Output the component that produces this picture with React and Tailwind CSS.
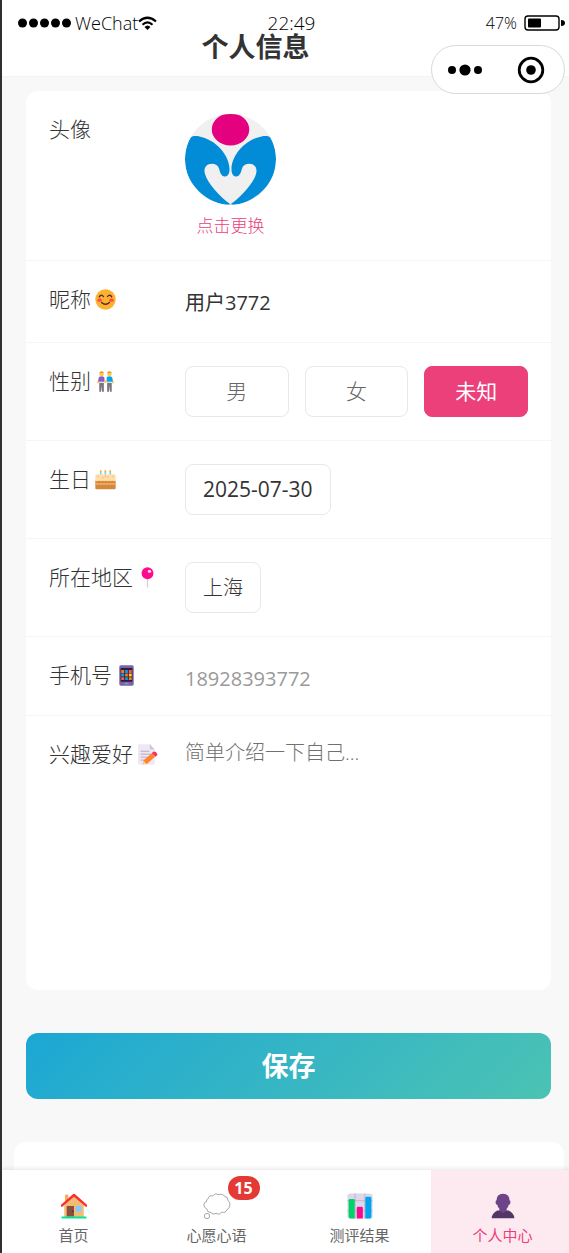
import React, { useState } from "react";

function LogoHalf() {
  return (
    <path
      d="M17 70C22 66 32 65 43 67C92 76 134 124 133 166C133 180 127 187 119 187C110 187 105 178 102 164C99 154 91 149 80 149C64 149 54 162 60 180C68 206 100 244 136 270C122 273 104 269 84 260C34 236 0 190 0 136C0 108 7 85 17 70Z"
      fill="#028cd8"
    />
  );
}

function AvatarArt() {
  return (
    <svg viewBox="0 0 272 272" className="block size-[91px]" role="img" aria-label="头像">
      <clipPath id="avatar-round">
        <circle cx="136" cy="136" r="136" />
      </clipPath>
      <g clipPath="url(#avatar-round)">
        <rect width="272" height="272" fill="#f0f0f0" />
        <ellipse cx="136" cy="46" rx="56" ry="48" fill="#e4007f" />
        <LogoHalf />
        <g transform="translate(272 0) scale(-1 1)">
          <LogoHalf />
        </g>
      </g>
    </svg>
  );
}

function Icon({ children, className = "size-[21px]" }) {
  return (
    <svg viewBox="0 0 64 64" className={"shrink-0 " + className} aria-hidden="true">
      {children}
    </svg>
  );
}

const Smile = () => (
  <Icon>
    <circle cx="32" cy="32" r="31" fill="#ffb02e" />
    <ellipse cx="14" cy="34" rx="7" ry="5" fill="#ff4a4a" />
    <ellipse cx="50" cy="34" rx="7" ry="5" fill="#ff4a4a" />
    <g fill="none" stroke="#402a32" strokeWidth="4" strokeLinecap="round">
      <path d="M13 24Q19 14 26 23M38 23Q45 14 51 24M20 41Q32 52 44 41" />
    </g>
  </Icon>
);

const People = () => (
  <Icon>
    <path d="M13 36H27V63H21.5L20 45L18.500 63H13ZM37 36H51V63H45.500L44 45L42.500 63H37Z" fill="#7d7481" />
    <path d="M12 18Q20 14 28 18L30 33H12L11 36H8Z" fill="#8b5cc4" />
    <path d="M36 18Q44 14 52 18L56 36H53L52 33H35Z" fill="#00a6ed" />
    <path d="M28 29H36V36H28ZM7 31H12V37H7ZM52 31H57V37H52Z" fill="#ffc83d" />
    <circle cx="20" cy="9" r="7" fill="#ffc83d" />
    <circle cx="44" cy="9" r="7" fill="#ffc83d" />
    <path d="M13 7Q14 1 20 1Q26 1 27 7L23 5H17ZM37 7Q38 1 44 1Q50 1 51 7L47 5H41Z" fill="#d68c4a" />
  </Icon>
);

const Cake = () => (
  <Icon>
    <path d="M15 7H20V22H15ZM29 7H34V22H29ZM44 7H49V22H44Z" fill="#5ce0f0" />
    <path d="M15 6Q17-2 20 6V9H15ZM29 6Q31-2 34 6V9H29ZM44 6Q46-2 49 6V9H44Z" fill="#ffb02e" />
    <rect x="1" y="34" width="62" height="28" rx="3" fill="#d3883e" />
    <rect x="1" y="43" width="62" height="5" fill="#f3ad61" />
    <path d="M1 21Q1 16 6 16H58Q63 16 63 21V36Q58 39 53 35Q48 39 43 35Q38 39 33 35Q28 39 23 35Q18 39 13 35Q7 39 1 36Z" fill="#ffdea7" />
    <g fill="#f9a06a">
      <circle cx="9" cy="23" r="2" />
      <circle cx="24" cy="27" r="2" />
      <circle cx="40" cy="25" r="2" />
      <circle cx="55" cy="23" r="2" />
      <circle cx="32" cy="22" r="2" />
    </g>
  </Icon>
);

const Pin = () => (
  <Icon>
    <rect x="30" y="32" width="4" height="31" rx="2" fill="#d3d3d3" />
    <circle cx="32" cy="19" r="18" fill="#ff0a8c" />
    <circle cx="38" cy="13" r="5" fill="#ffd6ee" />
  </Icon>
);

const Phone = () => (
  <Icon>
    <rect x="10" y="1" width="44" height="62" rx="5" fill="#7864a8" />
    <rect x="14" y="9" width="36" height="42" fill="#321b41" />
    <path d="M16 15H25V24H16ZM28 26H36V35H28ZM39 37H48V46H39Z" fill="#ff7a1a" />
    <path d="M28 15H36V24H28ZM16 26H25V35H16ZM28 37H36V46H28Z" fill="#00a6ed" />
    <path d="M39 15H48V24H39ZM16 37H25V46H16Z" fill="#ff5a3c" />
    <path d="M39 26H48V35H39Z" fill="#ffc83d" />
    <rect x="26" y="54" width="12" height="5" rx="2" fill="#998eb8" />
  </Icon>
);

const Memo = () => (
  <Icon>
    <path d="M7 1H39L54 17V59Q54 63 50 63H7Q3 63 3 59V5Q3 1 7 1Z" fill="#eee8f5" />
    <path d="M39 1L54 17H43Q39 17 39 13Z" fill="#cdc4d6" />
    <path d="M11 22H38M11 31H42M11 40H31M11 49H22" stroke="#b4aac2" strokeWidth="3" />
    <path d="M21 49L45 28L55 39L31 60L17 62Z" fill="#ff822d" />
    <path d="M17 62L20 51L29 60Z" fill="#ffce7c" />
    <path d="M47 26Q52 20 58 25Q65 32 60 36L56 39L45 28Z" fill="#f92f60" />
  </Icon>
);

const House = () => (
  <Icon className="size-[26px]">
    <rect x="10" y="4" width="8" height="24" fill="#f3ad61" />
    <path d="M8 30L32 7L56 30V59H8Z" fill="#f1bd74" />
    <path d="M2 31L32 5L62 31" fill="none" stroke="#f8312f" strokeWidth="6" strokeLinecap="round" strokeLinejoin="round" />
    <rect x="14" y="32" width="18" height="26" fill="#8c4f3c" />
    <circle cx="28" cy="45" r="2" fill="#402a32" />
    <rect x="36" y="32" width="14" height="14" fill="#83cbff" />
    <rect x="1" y="58" width="62" height="5" rx="2" fill="#00e69a" />
  </Icon>
);

const Thought = () => (
  <Icon className="size-[28px]">
    <g fill="#fff" stroke="#999" strokeWidth="2">
      <path d="M12 15Q13 7 22 9Q28 1 36 6Q45 3 49 10Q57 10 57 19Q64 25 61 33Q59 39 55 40Q52 49 43 46Q38 54 30 49Q22 53 18 47Q9 47 9 39Q1 36 2 28Q3 23 8 22Q7 17 12 15Z" />
      <circle cx="9" cy="55" r="6" />
    </g>
  </Icon>
);

const Chart = () => (
  <Icon className="size-[26px]">
    <rect x="1" y="1" width="62" height="62" rx="7" fill="#e0d6ea" />
    <path d="M20 1V63M44 1V63M1 19H63M1 44H63" stroke="#b8adc6" strokeWidth="2" />
    <path d="M4 18Q4 15 7 15H16Q19 15 19 18V63H9Q4 63 4 58Z" fill="#00d26a" />
    <rect x="24" y="34" width="15" height="29" rx="3" fill="#f70a8d" />
    <path d="M45 12Q45 9 48 9H57Q60 9 60 12V59Q60 63 56 63H45Z" fill="#00a6ed" />
  </Icon>
);

const Person = () => (
  <Icon className="size-[26px]">
    <path d="M4 62Q5 49 18 43H46Q59 49 60 62Z" fill="#533566" />
    <path d="M32 2Q48 2 48 18Q51 19 50 25Q49 29 46 29Q45 35 41 39V43L32 50L23 43V39Q19 35 18 29Q15 29 14 25Q13 19 16 18Q16 2 32 2Z" fill="#6d4488" />
  </Icon>
);

function Row({ label, icon, htmlFor, last, children }) {
  return (
    <div className={"flex items-start p-[23px] " + (last ? "" : "border-b border-[#f5f5f5]")}>
      <label
        id={htmlFor + "-label"}
        htmlFor={htmlFor}
        className="flex w-[136px] shrink-0 items-center gap-1 text-[21px] leading-[31px] font-light"
      >
        {label}
        {icon}
      </label>
      <div className="flex min-w-0 flex-1">{children}</div>
    </div>
  );
}

const boxed = "h-[51px] rounded-lg border border-[#e8e8e8] bg-white px-[17px]";
const genders = ["男", "女", "未知"];
const tabs = [
  { name: "首页", Glyph: House },
  { name: "心愿心语", Glyph: Thought, badge: 15 },
  { name: "测评结果", Glyph: Chart },
  { name: "个人中心", Glyph: Person, active: true },
];

function StatusBar() {
  return (
    <div className="absolute inset-x-0 top-0 grid h-[46px] grid-cols-3 items-center pr-1 pl-4 text-[18px] font-light text-black">
      <div className="flex items-center">
        <svg viewBox="0 0 53 10" className="h-[10px] w-[53px]" aria-hidden="true">
          <circle cx="4.500" cy="5" r="4.500" />
          <circle cx="15.500" cy="5" r="4.500" />
          <circle cx="26.500" cy="5" r="4.500" />
          <circle cx="37.500" cy="5" r="4.500" />
          <circle cx="48.500" cy="5" r="4.500" />
        </svg>
        <span className="ml-1">WeChat</span>
        <svg viewBox="0 0 19 14" className="h-[14px] w-[19px] shrink-0" fill="none" stroke="#000" strokeWidth="2.200" aria-hidden="true">
          <path d="M1 5.500Q9.500-2 18 5.500M4.500 8.800Q9.500 4 14.500 8.800" />
          <path d="M6.500 11Q9.500 8 12.500 11L9.500 14Z" fill="#000" stroke="none" />
        </svg>
      </div>
      <span className="text-center text-[19px]">22:49</span>
      <div className="flex items-center justify-end gap-[7px] text-[16px]">
        <span>47%</span>
        <svg viewBox="0 0 41 16" className="h-4 w-[41px]" aria-hidden="true">
          <rect x="1" y="1" width="34" height="14" rx="3" fill="none" stroke="#000" strokeWidth="1.400" />
          <rect x="4" y="3.500" width="13" height="9" rx="1" />
          <path d="M37 5Q41 5 41 8Q41 11 37 11Z" />
        </svg>
      </div>
    </div>
  );
}

export default function App() {
  const [gender, setGender] = useState("未知");
  return (
    <div
      lang="zh-CN"
      className="flex min-h-screen flex-col overflow-x-clip border-l-2 border-[#303033] bg-[#f8f8f8] font-['Open_Sans','Noto_Sans_CJK_SC',sans-serif] text-[#333]"
    >
      <header className="relative border-b border-[#f3f3f3] bg-white pt-[30px] pr-[60px] pb-[13px]">
        <h1 className="text-center text-[27px] leading-[33px] font-bold">个人信息</h1>
        <StatusBar />
        <div className="absolute top-[45px] right-1 flex h-[49px] w-[134px] items-center justify-between rounded-full border border-[#d8d8d8] bg-white pr-[19px] pl-4">
          <button type="button" aria-label="更多">
            <svg viewBox="0 0 35 12" className="h-3 w-[35px]">
              <circle cx="4" cy="6" r="4" />
              <circle cx="17" cy="6" r="5.600" />
              <circle cx="30" cy="6" r="4" />
            </svg>
          </button>
          <button type="button" aria-label="关闭">
            <svg viewBox="0 0 28 28" className="size-7">
              <circle cx="14" cy="14" r="11.800" fill="none" stroke="#000" strokeWidth="2.800" />
              <circle cx="14" cy="14" r="4.800" />
            </svg>
          </button>
        </div>
      </header>

      <main className="flex flex-1 flex-col pt-[14px]">
        <form className="mr-[18px] ml-6" onSubmit={(e) => e.preventDefault()}>
          <section className="rounded-xl bg-white">
            <Row label="头像" htmlFor="avatar">
              <button id="avatar" type="button" className="flex flex-col items-center gap-[10px]">
                <AvatarArt />
                <span className="text-[17px] leading-[22px] font-light text-[#ec407a]">点击更换</span>
              </button>
            </Row>
            <Row label="昵称" icon={<Smile />} htmlFor="nickname">
              <input id="nickname" defaultValue="用户3772" className="h-[35px] w-full min-w-0 text-[20px] outline-none" />
            </Row>
            <Row label="性别" icon={<People />} htmlFor="gender">
              <div id="gender" role="group" aria-labelledby="gender-label" className="flex flex-1 gap-4">
                {genders.map((g) => (
                  <button
                    key={g}
                    type="button"
                    aria-pressed={g === gender}
                    onClick={() => setGender(g)}
                    className={
                      "h-[51px] flex-1 rounded-lg border text-[21px] " +
                      (g === gender
                        ? "border-[#ec407a] bg-[#ec407a] text-white"
                        : "border-[#e8e8e8] bg-white font-light text-[#666]")
                    }
                  >
                    {g}
                  </button>
                ))}
              </div>
            </Row>
            <Row label="生日" icon={<Cake />} htmlFor="birthday">
              <button id="birthday" type="button" className={boxed + " text-[21px]"}>2025-07-30</button>
            </Row>
            <Row label="所在地区" icon={<Pin />} htmlFor="region">
              <button id="region" type="button" className={boxed + " text-[20px] font-light"}>上海</button>
            </Row>
            <Row label="手机号" icon={<Phone />} htmlFor="phone">
              <input id="phone" type="tel" readOnly value="18928393772" className="h-8 w-full min-w-0 pt-1 text-[20px] text-[#999] outline-none" />
            </Row>
            <Row label="兴趣爱好" icon={<Memo />} htmlFor="hobby" last>
              <textarea
                id="hobby"
                placeholder="简单介绍一下自己..."
                className="h-[228px] w-full resize-none text-[20px] leading-[28px] font-light outline-none placeholder:text-[#707070]"
              />
            </Row>
          </section>
          <button
            type="submit"
            className="mt-[43px] h-[66px] w-full rounded-xl bg-linear-135 from-[#1ba7d4] to-[#4bc3b3] text-[27px] font-bold text-white"
          >
            保存
          </button>
        </form>
        <section className="mt-[43px] mr-[5px] ml-3 min-h-7 flex-1 rounded-t-xl bg-white" />
      </main>

      <nav className="sticky bottom-0 -mr-[5px] grid grid-cols-4 bg-white shadow-[0_-2px_4px_rgba(0,0,0,0.08)]">
        {tabs.map(({ name, Glyph, badge, active }) => (
          <a
            key={name}
            href="#"
            aria-current={active ? "page" : undefined}
            className={
              "flex h-[83px] flex-col items-center pt-[22px] text-[15px] leading-5 " +
              (active ? "bg-[#fdeaf1] text-[#ec407a]" : "text-[#666]")
            }
          >
            <span className="relative flex h-[28px] items-center">
              <Glyph />
              {badge && (
                <span className="absolute -top-4 left-[25px] flex h-6 w-8 items-center justify-center rounded-full bg-[#e53935] text-[16px] font-bold text-white">
                  {badge}
                </span>
              )}
            </span>
            <span className="mt-[5px]">{name}</span>
          </a>
        ))}
      </nav>
    </div>
  );
}
